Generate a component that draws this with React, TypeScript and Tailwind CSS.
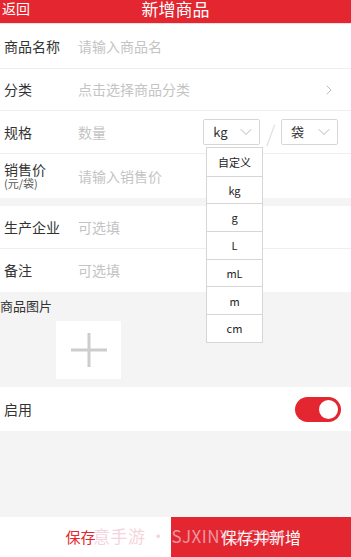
import { ChevronRight, ChevronDown } from "lucide-react";

const units = ["自定义", "kg", "g", "L", "mL", "m", "cm"];

function Row({
  label,
  placeholder,
  className = "",
  children,
}: {
  label: React.ReactNode;
  placeholder: string;
  className?: string;
  children?: React.ReactNode;
}) {
  return (
    <div className={`flex items-center bg-white ${className}`}>
      <div className="w-[78px] shrink-0 pl-[4px] text-[14px] text-[#333]">{label}</div>
      <div className="flex-1 text-[14px] text-[#c4c4c4]">{placeholder}</div>
      {children}
    </div>
  );
}

function UnitSelect({ value }: { value: string }) {
  return (
    <div className="flex h-[26px] w-[57px] items-center justify-between rounded-[2px] border border-[#d6d6d6] bg-white pl-[9px] pr-[3px] text-[13px] text-[#333]">
      <span>{value}</span>
      <ChevronDown size={20} strokeWidth={1} className="text-[#aaa]" />
    </div>
  );
}

export default function App() {
  return (
    <div
      className="relative flex h-[557px] w-[351px] flex-col overflow-hidden bg-[#f4f4f4]"
      style={{ fontFamily: '"Noto Sans CJK SC", "Noto Sans", sans-serif' }}
    >
      {/* header */}
      <div className="relative flex h-[23px] shrink-0 items-start bg-[#e3262f] text-white">
        <span className="pl-[2px] text-[14px] leading-[17px]">返回</span>
        <span className="absolute left-0 right-0 top-0 text-center text-[17px] leading-[18px]">新增商品</span>
      </div>
      <div className="h-[1px] shrink-0 bg-[#f6dcdc]" />

      <Row label="商品名称" placeholder="请输入商品名" className="h-[45px] border-b border-[#eee]" />
      <Row label="分类" placeholder="点击选择商品分类" className="h-[42px] border-b border-[#eee]">
        <ChevronRight size={16} strokeWidth={1.2} className="mr-[14px] text-[#aaa]" />
      </Row>
      <Row label="规格" placeholder="数量" className="relative h-[43px] border-b border-[#eee]">
        <div className="mr-[13px] flex items-center">
          <UnitSelect value="kg" />
          <span className="mx-[6px] text-[22px] font-thin leading-none text-[#d0d0d0]">/</span>
          <UnitSelect value="袋" />
        </div>
      </Row>
      <Row
        label={
          <div className="flex flex-col">
            <span className="text-[14px] leading-[15px]">销售价</span>
            <span className="text-[11px] leading-[13px] text-[#555]">(元/袋)</span>
          </div>
        }
        placeholder="请输入销售价"
        className="h-[44px]"
      />
      <div className="h-[8px] shrink-0" />
      <Row label="生产企业" placeholder="可选填" className="h-[43px] border-b border-[#eee]" />
      <Row label="备注" placeholder="可选填" className="h-[43px]" />

      {/* picture */}
      <div className="flex h-[95px] shrink-0 flex-col">
        <span className="mt-[6px] text-[13px] leading-[16px] text-[#333]">商品图片</span>
        <div className="ml-[56px] mt-[7px] flex h-[58px] w-[65px] items-center justify-center bg-white">
          <svg width="38" height="36" viewBox="0 0 38 36">
            <path d="M19 1V35M1 18H37" stroke="#cdcdcd" strokeWidth="3" />
          </svg>
        </div>
      </div>

      {/* enable */}
      <div className="flex h-[44px] shrink-0 items-center justify-between bg-white pl-[4px] pr-[10px]">
        <span className="text-[14px] text-[#333]">启用</span>
        <div className="flex h-[25px] w-[46px] items-center justify-end rounded-full bg-[#e3262f] pr-[1px]">
          <div className="h-[23px] w-[23px] rounded-full border-[2px] border-[#e3262f] bg-white" />
        </div>
      </div>

      <div className="flex-1" />

      {/* bottom bar */}
      <div className="flex h-[40px] shrink-0">
        <div className="flex w-[171px] items-center justify-center bg-white pr-[10px] text-[15px] text-[#e3262f]">保存</div>
        <div className="flex flex-1 items-center justify-center bg-[#e3262f] text-[16px] text-white">保存并新增</div>
      </div>

      {/* watermark */}
      <div className="pointer-events-none absolute left-[93px] top-[523px] text-[17px] tracking-[0.5px] text-[#f3c3cf] opacity-70">
        意手游 · SJXINYU.COM
      </div>

      {/* unit dropdown */}
      <div className="absolute left-[206px] top-[147px] flex w-[57px] flex-col border border-[#d6d6d6] bg-white">
        {units.map((u, i) => (
          <div
            key={u}
            className={`flex h-[27.7px] items-center justify-center text-[11px] text-[#222] ${
              i > 0 ? "border-t border-[#d6d6d6]" : ""
            }`}
          >
            {u}
          </div>
        ))}
      </div>
    </div>
  );
}
